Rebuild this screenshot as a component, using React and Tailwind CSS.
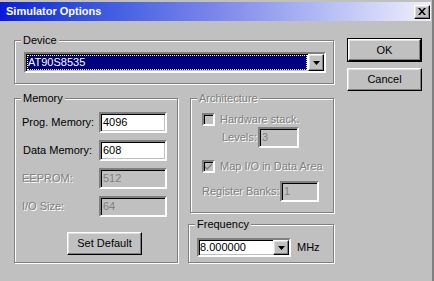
import React from "react";

const FACE = "bg-[#c0c0c0]";
const SUNKEN =
  "border-2 border-t-[#808080] border-l-[#808080] border-b-white border-r-white shadow-[inset_1px_1px_0_#000,inset_-1px_-1px_0_#c0c0c0]";
const RAISED =
  "border border-t-white border-l-white border-b-[#000] border-r-[#000] shadow-[inset_-1px_-1px_0_#808080,inset_1px_1px_0_#e0e0e0]";
const DISABLED = "text-[#808080] [text-shadow:1px_1px_0_#fff]";

function Group({ label, disabled, className, children }) {
  return (
    <div
      className={`relative border border-[#808080] shadow-[inset_1px_1px_0_#fff,1px_1px_0_#fff] ${className}`}
    >
      <span
        className={`absolute -top-[8px] left-[6px] px-[2px] leading-[14px] ${FACE} ${
          disabled ? DISABLED : ""
        }`}
      >
        {label}
      </span>
      {children}
    </div>
  );
}

function Field({ value, disabled, className }) {
  return (
    <div
      className={`${SUNKEN} ${className} flex items-center pl-[2px] ${
        disabled ? `${FACE} text-[#808080]` : "bg-white"
      }`}
    >
      {value}
    </div>
  );
}

function DropButton({ className }) {
  return (
    <div className={`${RAISED} ${FACE} flex items-center justify-center ${className}`}>
      <svg width="7" height="4" viewBox="0 0 7 4">
        <path d="M0 0h7L3.5 4z" fill="#000" />
      </svg>
    </div>
  );
}

function Check({ checked }) {
  return (
    <div className={`${SUNKEN} ${FACE} h-[13px] w-[13px] shrink-0 flex items-center justify-center`}>
      {checked ? (
        <svg width="9" height="9" viewBox="0 0 9 9">
          <path d="M1 4l2 2 5-5v2l-5 5-2-2z" fill="#808080" />
        </svg>
      ) : null}
    </div>
  );
}

function Button({ children, isDefault, className }) {
  if (isDefault) {
    return (
      <div className={`border border-black ${className}`}>
        <div className={`${RAISED} ${FACE} h-full flex items-center justify-center`}>
          {children}
        </div>
      </div>
    );
  }
  return (
    <div className={`${RAISED} ${FACE} flex items-center justify-center ${className}`}>
      {children}
    </div>
  );
}

export default function App() {
  return (
    <div
      className={`h-[281px] w-[434px] overflow-hidden border-r-2 border-r-[#808080] ${FACE} font-['Liberation_Sans',Arial,sans-serif] text-[11px] leading-none text-black`}
    >
      <div className="mt-[2px] mr-[1px] flex h-[19px] items-center bg-linear-to-r from-[#0a18d8] via-[#7c86ea] to-[#f0f0fa] pl-[6px]">
        <span className="font-bold text-white">Simulator Options</span>
        <div
          className={`ml-auto mr-[1px] flex h-[14px] w-[16px] items-center justify-center ${RAISED} ${FACE}`}
        >
          <svg width="8" height="7" viewBox="0 0 8 7">
            <path d="M0 0h2l2 2.5L6 0h2L5 3.5 8 7H6L4 4.5 2 7H0l3-3.5z" fill="#000" />
          </svg>
        </div>
      </div>

      <div className="flex pl-[14px]">
        <div className="w-[320px] pt-[19px]">
          <Group label="Device" className="h-[44px] pl-[9px] pt-[11px]">
            <div className={`${SUNKEN} flex h-[21px] w-[302px] bg-white`}>
              <div className="m-[1px] flex flex-1 items-center bg-[#000080] pl-[1px] text-white outline-1 outline-dotted outline-offset-[-1px] outline-[#ffff80]">
                AT90S8535
              </div>
              <DropButton className="h-full w-[16px]" />
            </div>
          </Group>

          <div className="mt-[14px] flex">
            <Group label="Memory" className="h-[165px] w-[164px] pl-[7px] pt-[13px]">
              <div className="flex flex-col gap-[7px]">
                <div className="flex h-[21px] items-center">
                  <span className="w-[77px]">Prog. Memory:</span>
                  <Field value="4096" className="h-[21px] w-[68px]" />
                </div>
                <div className="flex h-[21px] items-center">
                  <span className="w-[77px] pl-[1px]">Data Memory:</span>
                  <Field value="608" className="h-[21px] w-[68px]" />
                </div>
                <div className="flex h-[21px] items-center">
                  <span className={`w-[77px] ${DISABLED}`}>EEPROM:</span>
                  <Field value="512" disabled className="h-[21px] w-[68px]" />
                </div>
                <div className="flex h-[21px] items-center">
                  <span className={`w-[77px] ${DISABLED}`}>I/O Size:</span>
                  <Field value="64" disabled className="h-[21px] w-[68px]" />
                </div>
              </div>
              <Button className="ml-[45px] mt-[15px] h-[23px] w-[75px]">Set Default</Button>
            </Group>

            <div className="ml-[12px] flex w-[144px] flex-col">
              <Group label="Architecture" disabled className="h-[115px] pl-[11px] pt-[14px]">
                <div className="flex h-[13px] items-center gap-[5px]">
                  <Check />
                  <span className={DISABLED}>Hardware stack.</span>
                </div>
                <div className="mt-[1px] flex h-[21px] items-center pl-[20px]">
                  <span className={`w-[36px] ${DISABLED}`}>Levels:</span>
                  <Field value="3" disabled className="h-[21px] w-[41px]" />
                </div>
                <div className="mt-[12px] flex h-[13px] items-center gap-[5px]">
                  <Check checked />
                  <span className={DISABLED}>Map I/O in Data Area</span>
                </div>
                <div className="mt-[8px] flex h-[21px] items-center">
                  <span className={`w-[78px] ${DISABLED}`}>Register Banks:</span>
                  <Field value="1" disabled className="h-[21px] w-[39px]" />
                </div>
              </Group>

              <Group label="Frequency" className="-ml-[2px] mt-[11px] h-[39px] pl-[8px] pt-[13px]">
                <div className="flex items-center">
                  <div className={`${SUNKEN} flex h-[19px] w-[94px] bg-white`}>
                    <div className="flex flex-1 items-center pl-[1px]">8.000000</div>
                    <DropButton className="h-full w-[16px]" />
                  </div>
                  <span className="ml-[6px]">MHz</span>
                </div>
              </Group>
            </div>
          </div>
        </div>

        <div className="ml-[13px] flex flex-col gap-[6px] pt-[17px]">
          <Button isDefault className="h-[24px] w-[75px]">
            OK
          </Button>
          <Button className="h-[23px] w-[75px]">Cancel</Button>
        </div>
      </div>
    </div>
  );
}
